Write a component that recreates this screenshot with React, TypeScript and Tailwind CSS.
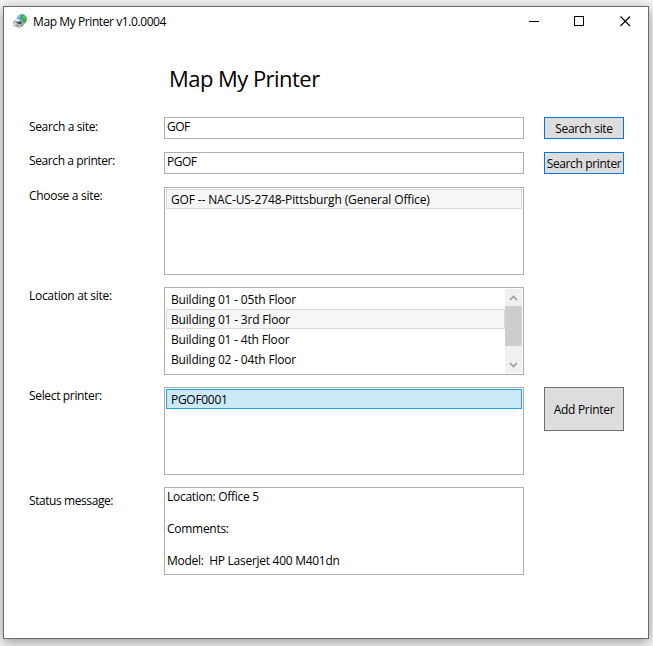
import type { ReactNode } from "react";

function PrinterIcon() {
  return (
    <svg width="16" height="16" viewBox="0 0 16 16" className="shrink-0">
      <circle cx="9.6" cy="5.4" r="5.1" fill="#4d9fe0" />
      <path d="M9 .6c2.600-.6 5 1.200 5.500 3.400.4 2.400-.6 4.600-2.500 5.800L10.500 8l.7-2-1.700-1.500L8 4.500l1.500-2z" fill="#35b435" />
      <path d="M5 3.500 7 1.300l1.500.2L7 3.800z" fill="#a9d4f2" />
      <path d="M11 2l1.500.5.5 2-1.200-.5z" fill="#90e05c" />
      <path d="M.6 8 3 5.400l6 .8 3.200 3-1.700 3.300-3.800 1.700-5-1.800z" fill="#b3b7bb" />
      <path d="M2.500 6.500 4 4.500l4 .9-1 2.200z" fill="#e4ebf2" />
      <path d="M4 8.500 8 7.200l2.800 1.600-3.300 1.800z" fill="#4b5055" />
      <path d="m.8 9.500 2.700-.5L8 11.500l-1.500 2-4.500-1z" fill="#dfe2e4" />
      <path d="m2.500 11.200 2.500-.7 2.500 1.300-1.500 1z" fill="#7b8086" />
      <path d="m9 11.500 2.500-2v1.800L9.500 13z" fill="#84888c" />
    </svg>
  );
}

function TitleBar() {
  return (
    <div className="flex h-[30px] items-center pl-2">
      <PrinterIcon />
      <span className="ml-[5px] grow text-[12px] leading-4 tracking-[-0.41px]">Map My Printer v1.0.0004</span>
      <svg width="138" height="30" viewBox="0 0 138 30" fill="none" stroke="#000" shapeRendering="crispEdges">
        <path d="M19 14.500h10" />
        <path d="M64.500 9.500h9v9h-9z" />
        <path d="m110.500 9.500 9.500 9.500M120 9.500l-9.500 9.500" shapeRendering="auto" strokeWidth="1.100" />
      </svg>
    </div>
  );
}

function Row({ label, labelClass, children, action }: { label: string; labelClass: string; children: ReactNode; action?: ReactNode }) {
  return (
    <div className="grid grid-cols-[135px_360px_80px] items-start">
      <span className={`leading-4 ${labelClass}`}>{label}</span>
      {children}
      <div className="ml-5 w-20">{action}</div>
    </div>
  );
}

function Field({ value }: { value: string }) {
  return <div className="h-[22px] border border-[#abadb3] pl-[2px] leading-[18px] tracking-[-0.5px]">{value}</div>;
}

function Item({ text, state = "border-transparent", spacing }: { text: string; state?: string; spacing: string }) {
  return <div className={`h-5 border pl-1 leading-5 whitespace-nowrap ${state} ${spacing}`}>{text}</div>;
}

const listBox = "h-[88px] border border-[#abadb3] p-px";

export default function App() {
  return (
    <div className="h-[646px] w-[653px] overflow-hidden bg-[#f5f5f5] pt-[6px] pl-[3px] font-['Open_Sans','Noto_Sans',sans-serif] text-[12px] text-black">
      <div className="h-[633px] w-[646px] border border-[#6b6b6b] bg-white shadow-[0_3px_12px_rgba(0,0,0,0.4)]">
        <TitleBar />
        <h1 className="mt-[25px] ml-[165px] text-[22px] leading-8 font-normal tracking-[-0.54px]">Map My Printer</h1>
        <main className="mt-[23px] flex flex-col gap-[13px] pl-[25px]">
          <Row
            label="Search a site:"
            labelClass="mt-[2px] tracking-[-0.35px]"
            action={<button className="block h-[22px] w-20 border border-[#0078d7] bg-[#dddddd] pt-px leading-5 tracking-[-0.3px]">Search site</button>}
          >
            <Field value="GOF" />
          </Row>
          <Row
            label="Search a printer:"
            labelClass="mt-px tracking-[-0.4px]"
            action={<button className="block h-[22px] w-20 border border-[#0078d7] bg-[#dddddd] pt-px leading-5 tracking-[-0.36px] whitespace-nowrap">Search printer</button>}
          >
            <Field value="PGOF" />
          </Row>
          <div className="flex flex-col gap-3">
            <Row label="Choose a site:" labelClass="mt-px tracking-[-0.3px]">
              <div className={listBox}>
                <Item text="GOF -- NAC-US-2748-Pittsburgh (General Office)" state="border-[#dadada] bg-[#f6f6f6]" spacing="tracking-[-0.14px]" />
              </div>
            </Row>
            <Row label="Location at site:" labelClass="mt-px tracking-[-0.3px]">
              <div className={`flex ${listBox}`}>
                <div className="grow">
                  <Item text="Building 01 - 05th Floor" spacing="tracking-[-0.18px]" />
                  <Item text="Building 01 - 3rd Floor" state="border-[#dadada] bg-[#f6f6f6]" spacing="tracking-[-0.18px]" />
                  <Item text="Building 01 - 4th Floor" spacing="tracking-[-0.18px]" />
                  <Item text="Building 02 - 04th Floor" spacing="tracking-[-0.18px]" />
                </div>
                <div className="flex w-[17px] flex-col bg-[#f0f0f0]">
                  <svg width="17" height="17" viewBox="0 0 17 17" fill="none" stroke="#9b9b9b" strokeWidth="1.700"><path d="m5 11 3.500-3.500 3.500 3.500" /></svg>
                  <div className="h-10 bg-[#cdcdcd]" />
                  <svg className="mt-auto" width="17" height="17" viewBox="0 0 17 17" fill="none" stroke="#9b9b9b" strokeWidth="1.700"><path d="m5 7 3.500 3.500 3.500-3.500" /></svg>
                </div>
              </div>
            </Row>
            <Row
              label="Select printer:"
              labelClass="mt-px tracking-[-0.34px]"
              action={<button className="block h-11 w-20 border border-[#707070] bg-[#dddddd] pt-px tracking-[-0.3px] whitespace-nowrap">Add Printer</button>}
            >
              <div className={listBox}>
                <Item text="PGOF0001" state="border-[#26a0da] bg-[#cbe8f6]" spacing="tracking-[-0.3px]" />
              </div>
            </Row>
            <Row label="Status message:" labelClass="mt-[6px] tracking-[-0.42px]">
              <div className="h-[88px] border border-[#abadb3] pt-px pl-[2px] leading-4 tracking-[-0.28px] whitespace-pre">
                {"Location: Office 5\n\nComments:\n\nModel:  HP Laserjet 400 M401dn"}
              </div>
            </Row>
          </div>
        </main>
      </div>
    </div>
  );
}
